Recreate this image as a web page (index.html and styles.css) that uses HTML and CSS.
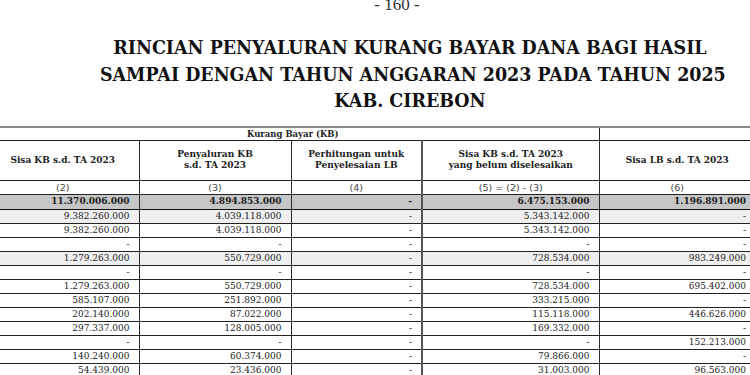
FILE: index.html
```html
<!DOCTYPE html>
<html lang="id">
<head>
    <meta charset="UTF-8">
    <meta name="viewport" content="width=device-width, initial-scale=1.0">
    <title>Rincian Penyaluran Kurang Bayar DBH</title>
    <link rel="stylesheet" href="styles.css">
</head>
<body>
    <div class="halaman">- 160 -</div>

    <h1 class="judul-dok">
        <span>RINCIAN PENYALURAN KURANG BAYAR DANA BAGI HASIL</span>
        <span>SAMPAI DENGAN TAHUN ANGGARAN 2023 PADA TAHUN 2025</span>
        <span>KAB. CIREBON</span>
    </h1>

    <table class="rekap">
        <colgroup>
            <col class="k1">
            <col class="k2">
            <col class="k3">
            <col class="k4">
            <col class="k5">
        </colgroup>
        <thead>
            <tr class="grup">
                <th colspan="4">Kurang Bayar (KB)</th>
                <th class="sep"></th>
            </tr>
            <tr class="kepala">
                <th>Sisa KB s.d. TA 2023</th>
                <th>Penyaluran KB<br>s.d. TA 2023</th>
                <th>Perhitungan untuk<br>Penyelesaian LB</th>
                <th class="tebal">Sisa KB s.d. TA 2023<br>yang belum diselesaikan</th>
                <th>Sisa LB s.d. TA 2023</th>
            </tr>
            <tr class="nomor">
                <td>(2)</td>
                <td>(3)</td>
                <td>(4)</td>
                <td class="tebal">(5) = (2) - (3)</td>
                <td>(6)</td>
            </tr>
        </thead>
        <tbody>
            <tr class="total">
                <td>11.370.006.000</td><td>4.894.853.000</td><td>-</td><td class="tebal">6.475.153.000</td><td>1.196.891.000</td>
            </tr>
            <tr class="abu">
                <td>9.382.260.000</td><td>4.039.118.000</td><td>-</td><td class="tebal">5.343.142.000</td><td>-</td>
            </tr>
            <tr>
                <td>9.382.260.000</td><td>4.039.118.000</td><td>-</td><td class="tebal">5.343.142.000</td><td>-</td>
            </tr>
            <tr>
                <td>-</td><td>-</td><td>-</td><td class="tebal">-</td><td>-</td>
            </tr>
            <tr class="abu">
                <td>1.279.263.000</td><td>550.729.000</td><td>-</td><td class="tebal">728.534.000</td><td>983.249.000</td>
            </tr>
            <tr>
                <td>-</td><td>-</td><td>-</td><td class="tebal">-</td><td>-</td>
            </tr>
            <tr>
                <td>1.279.263.000</td><td>550.729.000</td><td>-</td><td class="tebal">728.534.000</td><td>695.402.000</td>
            </tr>
            <tr>
                <td>585.107.000</td><td>251.892.000</td><td>-</td><td class="tebal">333.215.000</td><td>-</td>
            </tr>
            <tr>
                <td>202.140.000</td><td>87.022.000</td><td>-</td><td class="tebal">115.118.000</td><td>446.626.000</td>
            </tr>
            <tr>
                <td>297.337.000</td><td>128.005.000</td><td>-</td><td class="tebal">169.332.000</td><td>-</td>
            </tr>
            <tr>
                <td>-</td><td>-</td><td>-</td><td class="tebal">-</td><td>152.213.000</td>
            </tr>
            <tr>
                <td>140.240.000</td><td>60.374.000</td><td>-</td><td class="tebal">79.866.000</td><td>-</td>
            </tr>
            <tr>
                <td>54.439.000</td><td>23.436.000</td><td>-</td><td class="tebal">31.003.000</td><td>96.563.000</td>
            </tr>
        </tbody>
    </table>
</body>
</html>
```

FILE: styles.css
```css
body {
    margin: 0;
    width: 750px;
    height: 375px;
    overflow: hidden;
    background: #fff;
    color: #1c1c1c;
    font-family: "DejaVu Serif", serif;
}

.halaman {
    margin-top: -5px;
    padding-left: 44px;
    height: 20px;
    text-align: center;
    font: 17px/20px "Liberation Serif", serif;
    color: #333;
}

.judul-dok {
    margin: 19px 0 0;
    padding-left: 76px;
    text-align: center;
    font-size: 19px;
    line-height: 26.5px;
    font-weight: bold;
    color: #111;
    white-space: nowrap;
    transform: scaleX(0.92);
}
.judul-dok span { display: block; }

/* tabel rincian */
.rekap {
    margin: 12px 0 0 -13px;
    width: 768px;
    table-layout: fixed;
    border-collapse: collapse;
    font-size: 9px;
    border-top: 2px solid #8a8a8a;
}
.k1, .k2 { width: 152px; }
.k3 { width: 131px; }
.k4 { width: 177px; }
.k5 { width: 156px; }

.rekap th, .rekap td {
    padding: 0 9px 0 0;
    border-left: 1px solid #2a2a2a;
    border-bottom: 1px solid #222;
    white-space: nowrap;
    overflow: hidden;
}
.rekap th:first-child, .rekap td:first-child { border-left: none; }
.rekap .tebal { border-left: 2px solid #555; }

.grup th {
    height: 12px;
    padding: 0;
    font-size: 8.5px;
    line-height: 12px;
    text-align: center;
}
.grup .sep { border-left: 1px solid #222; }

.kepala th {
    height: 39px;
    padding: 0;
    font-size: 9px;
    line-height: 11px;
    text-align: center;
}

.nomor td {
    height: 13px;
    padding: 0;
    text-align: center;
    font: 9.5px/13px "DejaVu Sans", sans-serif;
    color: #444;
}

tbody td {
    height: 13px;
    line-height: 13px;
    text-align: right;
}
.total td {
    height: 14px;
    background: #c6c6c6;
    font-weight: bold;
    border-bottom: 1px solid #111;
}
.abu td { background: #efefef; }
.abu td { border-top: 1px solid #888; }
```
